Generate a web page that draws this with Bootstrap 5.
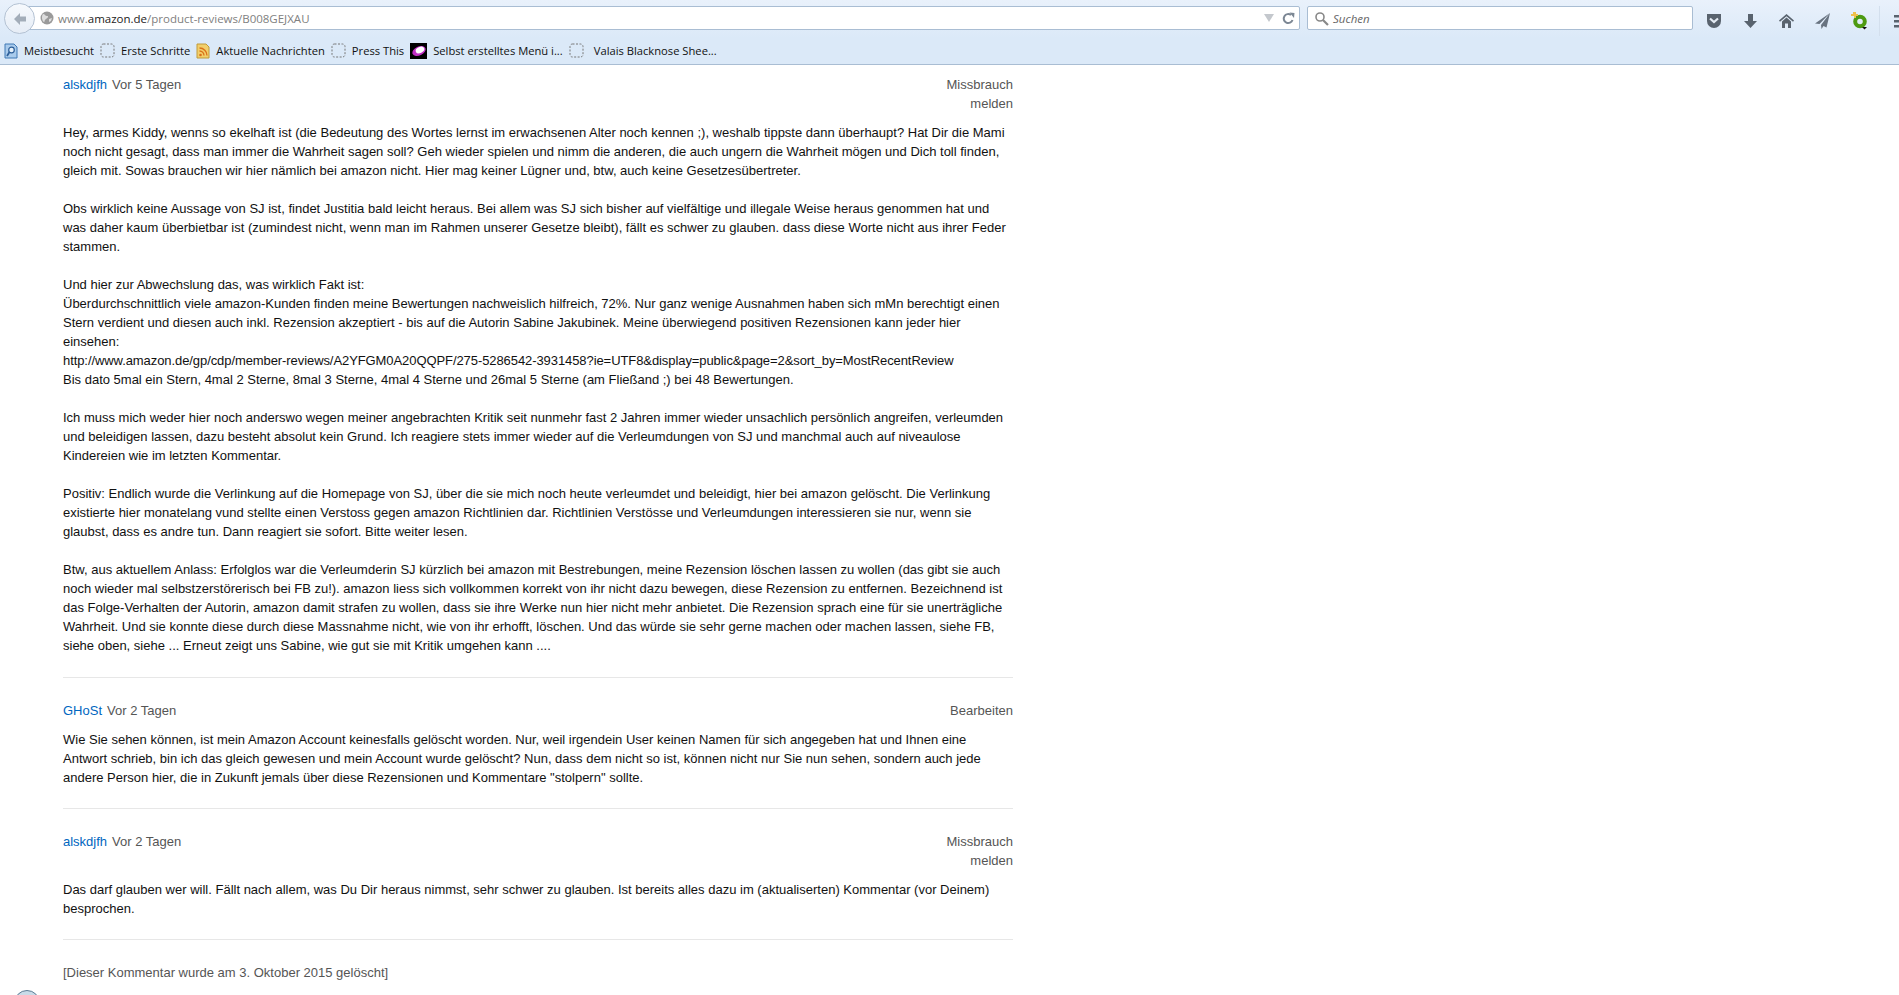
<!DOCTYPE html>
<html lang="de">

<head>
    <meta charset="UTF-8">
    <meta name="viewport" content="width=device-width, initial-scale=1">
    <title>amazon.de product reviews</title>
    <link href="https://cdn.jsdelivr.net/npm/bootstrap@5.3.0/dist/css/bootstrap.min.css" rel="stylesheet">
    <style>
        body {
            background-color: #fff;
            font-family: "Liberation Sans", Arial, sans-serif;
            font-size: 13px;
            line-height: 19px;
            color: #111;
            height: 995px;
            overflow: hidden;
        }

        .browser-chrome {
            height: 65px;
            background: linear-gradient(#e9f1fb, #dbe9f8 38px);
            border-bottom: 1px solid #a9bdd3;
            font-family: "Open Sans", sans-serif;
        }

        .nav-strip {
            height: 37px;
            padding-top: 6px;
            padding-left: 4px;
        }

        .back-btn {
            width: 31px;
            height: 31px;
            margin-top: -3px;
            margin-right: -12px;
            border-radius: 50%;
            background: linear-gradient(#f6f9fd, #e6edf6);
            border: 1px solid #b4c2d3;
            z-index: 1;
        }

        .url-field {
            width: 1277px;
            height: 24px;
            background: #fff;
            border: 1px solid #a9bdd3;
            border-radius: 2px;
            padding: 0 4px 0 16px;
            font-size: 11.5px;
            color: #808080;
        }

        .url-field b {
            font-weight: 400;
            color: #222;
        }

        .search-field {
            width: 386px;
            height: 24px;
            margin-left: 7px;
            background: #fff;
            border: 1px solid #a9bdd3;
            border-radius: 2px;
            padding-left: 6px;
            font-size: 11.5px;
            font-style: italic;
            color: #666;
        }

        .tool-icons {
            margin-left: 13px;
            gap: 21px;
        }

        .tool-sep {
            width: 1px;
            height: 30px;
            background: #d3dfed;
            margin-left: -9px;
            margin-right: -7px;
        }

        .bookmark-strip {
            height: 27px;
            padding-left: 4px;
            gap: 6px;
            font-size: 11.2px;
            color: #111;
        }

        .page-body {
            width: 950px;
            margin-left: 63px;
            padding-top: 10px;
        }

        .comment-meta {
            margin-bottom: 10px;
        }

        .comment-meta a {
            color: #0066c0;
            text-decoration: none;
            margin-right: 5px;
        }

        .meta-grey {
            color: #555;
        }

        .meta-action {
            width: 80px;
            text-align: right;
        }

        .comment-text {
            margin: 0;
        }

        .review-url {
            letter-spacing: -0.08px;
        }

        .comment-rule {
            margin: 21px 0 23px;
            height: 1px;
            background: #e7e7e7;
            border: 0;
            opacity: 1;
        }

        .comment-rule:first-of-type {
            margin-top: 22px;
        }

        .avatar-peek {
            position: absolute;
            left: 14px;
            top: 990px;
            width: 26px;
            height: 26px;
            border-radius: 50%;
            border: 1px solid #5d7d96;
            background: #c9dbe8;
        }
    </style>
</head>

<body>

    <div class="browser-chrome">
        <div class="nav-strip d-flex align-items-start">
            <div class="back-btn d-flex flex-shrink-0 align-items-center justify-content-center position-relative">
                <svg width="16" height="16" viewBox="0 0 16 16"><path d="M8 2 2 8l6 6V10.500h6v-5H8z" fill="#a3adb9"/></svg>
            </div>
            <div class="url-field d-flex flex-shrink-0 align-items-center">
                <svg class="me-1" width="14" height="14" viewBox="0 0 14 14"><circle cx="7" cy="7" r="6.500" fill="#9a9a9a"/><path d="M3 3c2 0 2 2 4 2s1 2-1 3-1 3-2 3-2-3-2-4 0-3 1-4zM9 8l3-1-1 3-2 1z" fill="#ddd"/></svg>
                <span><span>www.</span><b>amazon.de</b>/product-reviews/B008GEJXAU</span>
                <svg class="ms-auto" width="10" height="8" viewBox="0 0 10 8"><path d="M0 0h10L5 8z" fill="#c4c8cd"/></svg>
                <svg class="ms-2" width="13" height="13" viewBox="0 0 13 13"><path d="M10.500 8A4.500 4.500 0 1 1 9 3" fill="none" stroke="#7c8794" stroke-width="2"/><path d="M7.500 0.500 12.500 1 12 6z" fill="#7c8794"/></svg>
            </div>
            <div class="search-field d-flex flex-shrink-0 align-items-center gap-1">
                <svg width="15" height="15" viewBox="0 0 15 15"><circle cx="6" cy="6" r="4" fill="none" stroke="#888" stroke-width="1.600"/><path d="m9 9 5 5" stroke="#888" stroke-width="2.200"/></svg>
                <span>Suchen</span>
            </div>
            <div class="tool-icons d-flex flex-shrink-0 align-items-center">
                <svg width="16" height="16" viewBox="0 0 16 16"><path d="M1 1h14v7a7 7 0 0 1-14 0z" fill="#59636e"/><path d="m4 5.500 4 3.500 4-3.500" fill="none" stroke="#e4ebf3" stroke-width="2.200"/></svg>
                <svg width="15" height="16" viewBox="0 0 15 16"><path d="M5 1h5v7h4l-6.500 7L1 8h4z" fill="#59636e"/></svg>
                <svg width="15" height="16" viewBox="0 0 15 16"><path d="M7.500 1 0 7.500l1 1.300L7.500 3.200 14 8.800l1-1.300z" fill="#59636e"/><path d="M7.500 4.500 3 8.500V15h3v-4.500h3V15h3V8.500z" fill="#59636e"/></svg>
                <svg width="15" height="16" viewBox="0 0 15 16"><path d="M15 0 0 10.500l4.500 0.500L15 0 6 12l0.500 4 2-3 3 1.500z" fill="#687380"/></svg>
                <svg width="16" height="18" viewBox="0 0 16 18"><circle cx="9" cy="9.500" r="4.800" fill="none" stroke="#4d9a12" stroke-width="4"/><path d="M2 0h3v2h2v2H5v2H3V4H0V2h2z" fill="#efc04c"/><path d="m11 15 5 0-2.500 2.500z" fill="#111"/></svg>
                <div class="tool-sep"></div>
                <svg width="14" height="16" viewBox="0 0 14 16"><path d="M0 2h14v2.500H0zM0 7h14v2.500H0zM0 12h14v2.500H0z" fill="#59636e"/></svg>
            </div>
        </div>
        <div class="bookmark-strip d-flex align-items-center">
            <svg width="14" height="16" viewBox="0 0 14 16"><path d="M1 1h9l3 3v11H1z" fill="#a9cbec" stroke="#3f78b5"/><circle cx="7.500" cy="7" r="2.800" fill="#e6f1fa" stroke="#2d5f99" stroke-width="1.200"/><path d="m5.500 9-2.500 4" stroke="#2d5f99" stroke-width="1.800"/></svg>
            <span>Meistbesucht</span>
            <svg width="15" height="15" viewBox="0 0 15 15"><rect x="1" y="1" width="13" height="13" rx="2.500" fill="none" stroke="#777" stroke-dasharray="2 1.500"/></svg>
            <span>Erste Schritte</span>
            <svg width="14" height="16" viewBox="0 0 14 16"><path d="M1 1h9l3 3v11H1z" fill="#f2cf6b" stroke="#c09a3a"/><circle cx="4.500" cy="12" r="1.300" fill="#d9701a"/><path d="M3.500 8a4.500 4.500 0 0 1 4.500 4.500M3.500 5a7.500 7.500 0 0 1 7.500 7.500" fill="none" stroke="#d9701a" stroke-width="1.300"/></svg>
            <span>Aktuelle Nachrichten</span>
            <svg width="15" height="15" viewBox="0 0 15 15"><rect x="1" y="1" width="13" height="13" rx="2.500" fill="none" stroke="#777" stroke-dasharray="2 1.500"/></svg>
            <span>Press This</span>
            <svg width="17" height="16" viewBox="0 0 17 16"><rect width="17" height="16" fill="#000"/><ellipse cx="9" cy="8" rx="7" ry="4.500" transform="rotate(-25 9 8)" fill="#c12fc4"/><ellipse cx="10" cy="7" rx="4.500" ry="3" transform="rotate(-25 10 7)" fill="#fff"/></svg>
            <span>Selbst erstelltes Menü i...</span>
            <svg width="15" height="15" viewBox="0 0 15 15"><rect x="1" y="1" width="13" height="13" rx="2.500" fill="none" stroke="#777" stroke-dasharray="2 1.500"/></svg>
            <span class="ms-1">Valais Blacknose Shee...</span>
        </div>
    </div>

    <div class="page-body">
        <div class="comment-meta d-flex justify-content-between">
            <div><a href="#">alskdjfh</a><span class="meta-grey">Vor 5 Tagen</span></div>
            <div class="meta-action meta-grey">Missbrauch melden</div>
        </div>
        <p class="comment-text">Hey, armes Kiddy, wenns so ekelhaft ist (die Bedeutung des Wortes lernst im erwachsenen Alter noch kennen ;), weshalb tippste dann überhaupt? Hat Dir die Mami noch nicht gesagt, dass man immer die Wahrheit sagen soll? Geh wieder spielen und nimm die anderen, die auch ungern die Wahrheit mögen und Dich toll finden, gleich mit. Sowas brauchen wir hier nämlich bei amazon nicht. Hier mag keiner Lügner und, btw, auch keine Gesetzesübertreter.<br><br>Obs wirklich keine Aussage von SJ ist, findet Justitia bald leicht heraus. Bei allem was SJ sich bisher auf vielfältige und illegale Weise heraus genommen hat und was daher kaum überbietbar ist (zumindest nicht, wenn man im Rahmen unserer Gesetze bleibt), fällt es schwer zu glauben. dass diese Worte nicht aus ihrer Feder stammen.<br><br>Und hier zur Abwechslung das, was wirklich Fakt ist:<br>Überdurchschnittlich viele amazon-Kunden finden meine Bewertungen nachweislich hilfreich, 72%. Nur ganz wenige Ausnahmen haben sich mMn berechtigt einen Stern verdient und diesen auch inkl. Rezension akzeptiert - bis auf die Autorin Sabine Jakubinek. Meine überwiegend positiven Rezensionen kann jeder hier einsehen:<br><span class="review-url">http://www.amazon.de/gp/cdp/member-reviews/A2YFGM0A20QQPF/275-5286542-3931458?ie=UTF8&amp;display=public&amp;page=2&amp;sort_by=MostRecentReview</span><br>Bis dato 5mal ein Stern, 4mal 2 Sterne, 8mal 3 Sterne, 4mal 4 Sterne und 26mal 5 Sterne (am Fließand ;) bei 48 Bewertungen.<br><br>Ich muss mich weder hier noch anderswo wegen meiner angebrachten Kritik seit nunmehr fast 2 Jahren immer wieder unsachlich persönlich angreifen, verleumden und beleidigen lassen, dazu besteht absolut kein Grund. Ich reagiere stets immer wieder auf die Verleumdungen von SJ und manchmal auch auf niveaulose Kindereien wie im letzten Kommentar.<br><br>Positiv: Endlich wurde die Verlinkung auf die Homepage von SJ, über die sie mich noch heute verleumdet und beleidigt, hier bei amazon gelöscht. Die Verlinkung existierte hier monatelang vund stellte einen Verstoss gegen amazon Richtlinien dar. Richtlinien Verstösse und Verleumdungen interessieren sie nur, wenn sie glaubst, dass es andre tun. Dann reagiert sie sofort. Bitte weiter lesen.<br><br>Btw, aus aktuellem Anlass: Erfolglos war die Verleumderin SJ kürzlich bei amazon mit Bestrebungen, meine Rezension löschen lassen zu wollen (das gibt sie auch noch wieder mal selbstzerstörerisch bei FB zu!). amazon liess sich vollkommen korrekt von ihr nicht dazu bewegen, diese Rezension zu entfernen. Bezeichnend ist das Folge-Verhalten der Autorin, amazon damit strafen zu wollen, dass sie ihre Werke nun hier nicht mehr anbietet. Die Rezension sprach eine für sie unerträgliche Wahrheit. Und sie konnte diese durch diese Massnahme nicht, wie von ihr erhofft, löschen. Und das würde sie sehr gerne machen oder machen lassen, siehe FB, siehe oben, siehe ... Erneut zeigt uns Sabine, wie gut sie mit Kritik umgehen kann ....</p>
        <hr class="comment-rule">

        <div class="comment-meta d-flex justify-content-between">
            <div><a href="#">GHoSt</a><span class="meta-grey">Vor 2 Tagen</span></div>
            <div class="meta-action meta-grey">Bearbeiten</div>
        </div>
        <p class="comment-text">Wie Sie sehen können, ist mein Amazon Account keinesfalls gelöscht worden. Nur, weil irgendein User keinen Namen für sich angegeben hat und Ihnen eine Antwort schrieb, bin ich das gleich gewesen und mein Account wurde gelöscht? Nun, dass dem nicht so ist, können nicht nur Sie nun sehen, sondern auch jede andere Person hier, die in Zukunft jemals über diese Rezensionen und Kommentare "stolpern" sollte.</p>
        <hr class="comment-rule">

        <div class="comment-meta d-flex justify-content-between">
            <div><a href="#">alskdjfh</a><span class="meta-grey">Vor 2 Tagen</span></div>
            <div class="meta-action meta-grey">Missbrauch melden</div>
        </div>
        <p class="comment-text">Das darf glauben wer will. Fällt nach allem, was Du Dir heraus nimmst, sehr schwer zu glauben. Ist bereits alles dazu im (aktualiserten) Kommentar (vor Deinem) besprochen.</p>
        <hr class="comment-rule">

        <div class="meta-grey">[Dieser Kommentar wurde am 3. Oktober 2015 gelöscht]</div>
    </div>
    <div class="avatar-peek"></div>

    <script src="https://cdn.jsdelivr.net/npm/bootstrap@5.3.0/dist/js/bootstrap.bundle.min.js"></script>
</body>
</html>
